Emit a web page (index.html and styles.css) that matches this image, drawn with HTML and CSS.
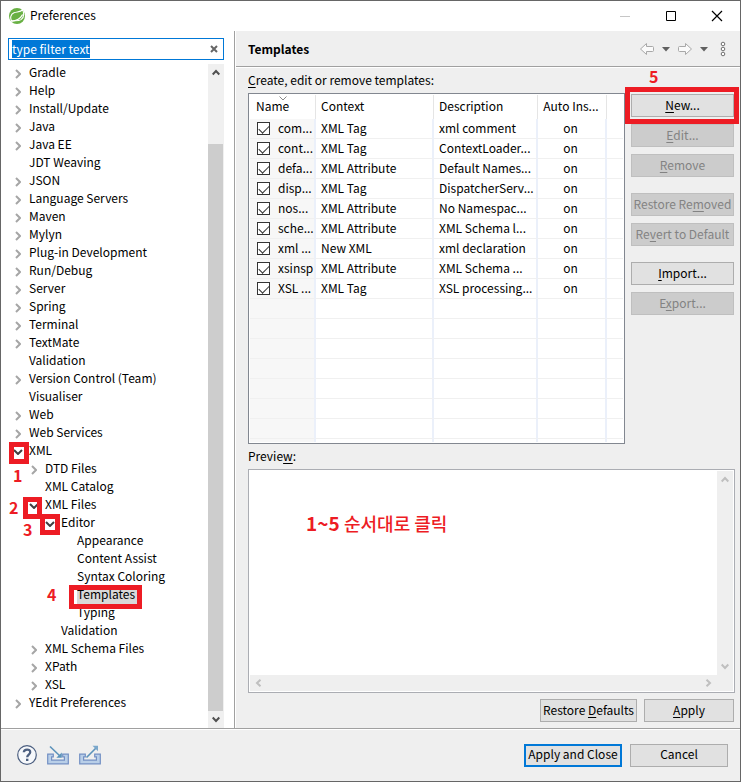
FILE: index.html
```html
<!DOCTYPE html>
<html lang="en">
<head>
<meta charset="utf-8">
<title>Preferences</title>
<link rel="stylesheet" href="styles.css">
</head>
<body>
<svg class="defs" aria-hidden="true">
  <symbol id="right" viewBox="0 0 6 10"><path d="M1 1l4 4-4 4" fill="none" stroke="#a6a6a6" stroke-width="2"/></symbol>
  <symbol id="down" viewBox="0 0 10 6"><path d="M1 1l4 4 4-4" fill="none" stroke="#404040" stroke-width="2"/></symbol>
  <symbol id="scroll-up" viewBox="0 0 8 7"><path d="M.7 5.500L4 2l3.300 3.500" fill="none" stroke="currentColor" stroke-width="2"/></symbol>
  <symbol id="scroll-down" viewBox="0 0 8 7"><path d="M.7 1.500L4 5l3.300-3.500" fill="none" stroke="currentColor" stroke-width="2"/></symbol>
  <symbol id="scroll-left" viewBox="0 0 7 8"><path d="M5.500.7L2 4l3.500 3.300" fill="none" stroke="currentColor" stroke-width="2"/></symbol>
  <symbol id="scroll-right" viewBox="0 0 7 8"><path d="M1.500.7L5 4 1.500 7.300" fill="none" stroke="currentColor" stroke-width="2"/></symbol>
</svg>

<header class="titlebar">
  <svg class="logo" width="16" height="16" viewBox="0 0 16 16">
    <circle cx="8" cy="8" r="8" fill="#68b043"/>
    <path d="M13.600 1.600C15.200 5.500 14.800 9.600 12 11.600c-2.800 1.900-6 .8-9.300 1.500C.9 10 1.500 6.200 5 4.800c3.200-1.200 6.600-.4 8.600-3.200z" fill="#68b043" stroke="#fff" stroke-width="1.100"/>
    <path d="M2.300 13.200c4.700-.4 9-2.200 11.300-6.700" fill="none" stroke="#fff" stroke-width="1.300"/>
  </svg>
  <h1>Preferences</h1>
  <div class="window-controls">
    <button type="button" aria-label="Minimize" disabled><svg width="12" height="12"><path d="M1 6.500h10" stroke="#c6c6c6"/></svg></button>
    <button type="button" aria-label="Maximize"><svg width="12" height="12"><path d="M1.500 1.500h9v9h-9z" fill="none" stroke="#000"/></svg></button>
    <button type="button" aria-label="Close"><svg width="12" height="12"><path d="M1 1l10 10M11 1L1 11" stroke="#000" stroke-width="1.200"/></svg></button>
  </div>
</header>

<main class="panes">
  <nav class="sidebar" aria-label="Preference pages">
    <div class="filter">
      <input type="text" aria-label="Filter" value="type filter text" id="filter" autofocus>
      <button type="button" aria-label="Clear"><svg width="8" height="8"><path d="M1 1l6 6M7 1L1 7" stroke="#666" stroke-width="2"/></svg></button>
    </div>
    <div class="tree-area">
      <ul class="tree">
        <li><div class="row"><button type="button" aria-label="Expand"><svg width="6" height="10"><use href="#right"/></svg></button><span>Gradle</span></div></li>
        <li><div class="row"><button type="button" aria-label="Expand"><svg width="6" height="10"><use href="#right"/></svg></button><span>Help</span></div></li>
        <li><div class="row"><button type="button" aria-label="Expand"><svg width="6" height="10"><use href="#right"/></svg></button><span>Install/Update</span></div></li>
        <li><div class="row"><button type="button" aria-label="Expand"><svg width="6" height="10"><use href="#right"/></svg></button><span>Java</span></div></li>
        <li><div class="row"><button type="button" aria-label="Expand"><svg width="6" height="10"><use href="#right"/></svg></button><span>Java EE</span></div></li>
        <li><div class="row leaf"><span>JDT Weaving</span></div></li>
        <li><div class="row"><button type="button" aria-label="Expand"><svg width="6" height="10"><use href="#right"/></svg></button><span>JSON</span></div></li>
        <li><div class="row"><button type="button" aria-label="Expand"><svg width="6" height="10"><use href="#right"/></svg></button><span>Language Servers</span></div></li>
        <li><div class="row"><button type="button" aria-label="Expand"><svg width="6" height="10"><use href="#right"/></svg></button><span>Maven</span></div></li>
        <li><div class="row"><button type="button" aria-label="Expand"><svg width="6" height="10"><use href="#right"/></svg></button><span>Mylyn</span></div></li>
        <li><div class="row"><button type="button" aria-label="Expand"><svg width="6" height="10"><use href="#right"/></svg></button><span>Plug-in Development</span></div></li>
        <li><div class="row"><button type="button" aria-label="Expand"><svg width="6" height="10"><use href="#right"/></svg></button><span>Run/Debug</span></div></li>
        <li><div class="row"><button type="button" aria-label="Expand"><svg width="6" height="10"><use href="#right"/></svg></button><span>Server</span></div></li>
        <li><div class="row"><button type="button" aria-label="Expand"><svg width="6" height="10"><use href="#right"/></svg></button><span>Spring</span></div></li>
        <li><div class="row"><button type="button" aria-label="Expand"><svg width="6" height="10"><use href="#right"/></svg></button><span>Terminal</span></div></li>
        <li><div class="row"><button type="button" aria-label="Expand"><svg width="6" height="10"><use href="#right"/></svg></button><span>TextMate</span></div></li>
        <li><div class="row leaf"><span>Validation</span></div></li>
        <li><div class="row"><button type="button" aria-label="Expand"><svg width="6" height="10"><use href="#right"/></svg></button><span>Version Control (Team)</span></div></li>
        <li><div class="row leaf"><span>Visualiser</span></div></li>
        <li><div class="row"><button type="button" aria-label="Expand"><svg width="6" height="10"><use href="#right"/></svg></button><span>Web</span></div></li>
        <li><div class="row"><button type="button" aria-label="Expand"><svg width="6" height="10"><use href="#right"/></svg></button><span>Web Services</span></div></li>
        <li>
          <div class="row"><button type="button" aria-label="Collapse"><svg width="10" height="6"><use href="#down"/></svg></button><span>XML</span><i class="mark mark-1"></i><b class="step step-1">1</b></div>
          <ul>
            <li><div class="row"><button type="button" aria-label="Expand"><svg width="6" height="10"><use href="#right"/></svg></button><span>DTD Files</span></div></li>
            <li><div class="row leaf"><span>XML Catalog</span></div></li>
            <li>
              <div class="row"><button type="button" aria-label="Collapse"><svg width="10" height="6"><use href="#down"/></svg></button><span>XML Files</span><i class="mark mark-2"></i><b class="step step-2">2</b></div>
              <ul>
                <li>
                  <div class="row"><button type="button" aria-label="Collapse"><svg width="10" height="6"><use href="#down"/></svg></button><span>Editor</span><i class="mark mark-3"></i><b class="step step-3">3</b></div>
                  <ul>
                    <li><div class="row leaf"><span>Appearance</span></div></li>
                    <li><div class="row leaf"><span>Content Assist</span></div></li>
                    <li><div class="row leaf"><span>Syntax Coloring</span></div></li>
                    <li><div class="row leaf"><span class="selected">Templates</span><i class="mark mark-4"></i><b class="step step-4">4</b></div></li>
                    <li><div class="row leaf"><span>Typing</span></div></li>
                  </ul>
                </li>
                <li><div class="row leaf"><span>Validation</span></div></li>
              </ul>
            </li>
            <li><div class="row"><button type="button" aria-label="Expand"><svg width="6" height="10"><use href="#right"/></svg></button><span>XML Schema Files</span></div></li>
            <li><div class="row"><button type="button" aria-label="Expand"><svg width="6" height="10"><use href="#right"/></svg></button><span>XPath</span></div></li>
            <li><div class="row"><button type="button" aria-label="Expand"><svg width="6" height="10"><use href="#right"/></svg></button><span>XSL</span></div></li>
          </ul>
        </li>
        <li><div class="row"><button type="button" aria-label="Expand"><svg width="6" height="10"><use href="#right"/></svg></button><span>YEdit Preferences</span></div></li>
      </ul>
      <div class="scrollbar">
        <button type="button" aria-label="Scroll up"><svg width="8" height="7"><use href="#scroll-up"/></svg></button>
        <div class="track"><div class="thumb"></div></div>
        <button type="button" aria-label="Scroll down"><svg width="8" height="7"><use href="#scroll-down"/></svg></button>
      </div>
    </div>
  </nav>

  <section class="page">
    <header class="page-head">
      <h2>Templates</h2>
      <div class="tools">
        <button type="button" aria-label="Back"><svg width="16" height="14"><path d="M1.500 7L7.500 1.500v3h6q1 0 1 1v3q0 1-1 1h-6v3z" fill="#fafafa" stroke="#a8a8a8"/></svg></button>
        <button type="button" aria-label="Back history"><svg width="8" height="5"><path d="M0 0h8L4 4.500z" fill="#606060"/></svg></button>
        <button type="button" aria-label="Forward"><svg width="16" height="14"><path d="M14.500 7L8.500 1.500v3h-6q-1 0-1 1v3q0 1 1 1h6v3z" fill="#fafafa" stroke="#a8a8a8"/></svg></button>
        <button type="button" aria-label="Forward history"><svg width="8" height="5"><path d="M0 0h8L4 4.500z" fill="#606060"/></svg></button>
        <button type="button" aria-label="Menu"><svg width="6" height="16" fill="#fff" stroke="#707070"><circle cx="3" cy="3" r="1.800"/><circle cx="3" cy="8" r="1.800"/><circle cx="3" cy="13" r="1.800"/></svg></button>
      </div>
    </header>

    <div class="content">
      <p class="label"><u>C</u>reate, edit or remove templates:</p>
      <div class="editor">
        <div class="table-box">
          <table>
            <colgroup><col class="c-name"><col class="c-context"><col class="c-desc"><col class="c-auto"><col></colgroup>
            <thead><tr><th class="sorted">Name<svg width="8" height="5"><path d="M.5.5L4 4 7.500.5" fill="none" stroke="#888"/></svg></th><th>Context</th><th>Description</th><th class="on">Auto Ins...</th><th></th></tr></thead>
            <tbody>
              <tr><td><label><input type="checkbox" checked>com...</label></td><td>XML Tag</td><td>xml comment</td><td class="on">on</td><td></td></tr>
              <tr><td><label><input type="checkbox" checked>cont...</label></td><td>XML Tag</td><td>ContextLoader...</td><td class="on">on</td><td></td></tr>
              <tr><td><label><input type="checkbox" checked>defa...</label></td><td>XML Attribute</td><td>Default Names...</td><td class="on">on</td><td></td></tr>
              <tr><td><label><input type="checkbox" checked>disp...</label></td><td>XML Tag</td><td>DispatcherServ...</td><td class="on">on</td><td></td></tr>
              <tr><td><label><input type="checkbox" checked>nos...</label></td><td>XML Attribute</td><td>No Namespac...</td><td class="on">on</td><td></td></tr>
              <tr><td><label><input type="checkbox" checked>sche...</label></td><td>XML Attribute</td><td>XML Schema l...</td><td class="on">on</td><td></td></tr>
              <tr><td><label><input type="checkbox" checked>xml ...</label></td><td>New XML</td><td>xml declaration</td><td class="on">on</td><td></td></tr>
              <tr><td><label><input type="checkbox" checked>xsinsp</label></td><td>XML Attribute</td><td>XML Schema ...</td><td class="on">on</td><td></td></tr>
              <tr><td><label><input type="checkbox" checked>XSL ...</label></td><td>XML Tag</td><td>XSL processing...</td><td class="on">on</td><td></td></tr>
              <tr><td></td><td></td><td></td><td></td><td></td></tr>
              <tr><td></td><td></td><td></td><td></td><td></td></tr>
              <tr><td></td><td></td><td></td><td></td><td></td></tr>
              <tr><td></td><td></td><td></td><td></td><td></td></tr>
              <tr><td></td><td></td><td></td><td></td><td></td></tr>
              <tr><td></td><td></td><td></td><td></td><td></td></tr>
              <tr><td></td><td></td><td></td><td></td><td></td></tr>
              <tr class="rest"><td></td><td></td><td></td><td></td><td></td></tr>
            </tbody>
          </table>
        </div>
        <div class="actions">
          <div class="group">
            <div class="anchor"><button type="button" class="btn"><span><u>N</u>ew...</span></button><i class="mark mark-5"></i><b class="step step-5">5</b></div>
            <button type="button" class="btn" disabled><span><u>E</u>dit...</span></button>
            <button type="button" class="btn" disabled><span><u>R</u>emove</span></button>
          </div>
          <div class="group">
            <button type="button" class="btn" disabled><span>Restore Re<u>m</u>oved</span></button>
            <button type="button" class="btn" disabled><span>Re<u>v</u>ert to Default</span></button>
          </div>
          <div class="group">
            <button type="button" class="btn"><span><u>I</u>mport...</span></button>
            <button type="button" class="btn" disabled><span>E<u>x</u>port...</span></button>
          </div>
        </div>
      </div>

      <label class="label preview-label" for="preview">Previe<u>w</u>:</label>
      <div class="preview">
        <textarea id="preview" readonly></textarea>
        <div class="scrollbar faint">
          <button type="button" aria-label="Scroll up"><svg width="8" height="7"><use href="#scroll-up"/></svg></button>
          <div class="track"></div>
          <button type="button" aria-label="Scroll down"><svg width="8" height="7"><use href="#scroll-down"/></svg></button>
        </div>
        <div class="scrollbar-h faint">
          <button type="button" aria-label="Scroll left"><svg width="7" height="8"><use href="#scroll-left"/></svg></button>
          <button type="button" aria-label="Scroll right"><svg width="7" height="8"><use href="#scroll-right"/></svg></button>
        </div>
        <b class="step note">1~5 <span>순서대로 클릭</span></b>
      </div>

      <div class="page-actions">
        <button type="button" class="btn wide"><span>Restore <u>D</u>efaults</span></button>
        <button type="button" class="btn apply"><span><u>A</u>pply</span></button>
      </div>
    </div>
  </section>
</main>

<footer class="footer">
  <div class="foot-icons">
    <button type="button" aria-label="Help"><svg width="20" height="20"><circle cx="10" cy="10" r="9.300" fill="#f6f8fb" stroke="#4c5f80" stroke-width="1.200"/><path d="M6.800 7.300C7 3.600 13.400 3.600 13.200 7.300 13.100 9.600 10.200 9.700 10.200 12.300" fill="none" stroke="#4c5f80" stroke-width="2.300"/><path d="M9 13.700h2.400v2.300H9z" fill="#4c5f80"/></svg></button>
    <button type="button" aria-label="Import"><svg width="22" height="20"><path d="M.7 9.200h5.600v2.600H4.600v3.400h12.800v-3.400h-1.700V9.200h5.600v9.600H.7z" fill="#b9cfe8" stroke="#7390c4" stroke-width="1.200"/><path d="M3 1.500l10.500 10" stroke="#5b92ba" stroke-width="1.600"/><path d="M14.800 7.500v5.300H9.300z" fill="#5b92ba"/></svg></button>
    <button type="button" aria-label="Export"><svg width="22" height="20"><path d="M.7 9.200h5.600v2.600H4.600v3.400h12.800v-3.400h-1.700V9.200h5.600v9.600H.7z" fill="#b9cfe8" stroke="#7390c4" stroke-width="1.200"/><path d="M7.500 12.500L18 2" stroke="#5b92ba" stroke-width="1.600"/><path d="M13.500.8H19v5.500z" fill="#7aa7cb"/></svg></button>
  </div>
  <div class="foot-actions">
    <button type="button" class="btn primary"><span>Apply and Close</span></button>
    <button type="button" class="btn"><span>Cancel</span></button>
  </div>
</footer>
<script src="script.js"></script>
</body>
</html>
```
FILE: styles.css
```css
* { box-sizing: border-box; }

body {
  margin: 0;
  min-height: 100vh;
  display: flex;
  flex-direction: column;
  border: 1px solid #666;
  background: #efefef;
  color: #000;
  font: 12px/18px "Noto Sans CJK KR", sans-serif;
}

button {
  margin: 0;
  padding: 0;
  border: 0;
  background: none;
  color: inherit;
  font: inherit;
}

svg { display: block; }
ul { list-style: none; margin: 0; padding: 0; }
.defs { position: absolute; width: 0; height: 0; }

.titlebar {
  display: flex;
  align-items: center;
  height: 30px;
  padding: 0 17px 0 8px;
  background: #fff;
}
.titlebar h1 { margin: 0 auto 0 5px; padding-bottom: 2px; font-size: 12px; font-weight: 400; }
.window-controls { display: flex; gap: 34px; }

.panes { flex: 1; display: grid; grid-template-columns: 235px 1fr; }

.sidebar {
  display: flex;
  flex-direction: column;
  border-right: 1px solid #fff;
  background: #fff;
  box-shadow: inset -1px 0 #a0a0a0;
}
.filter {
  display: flex;
  align-items: center;
  height: 22px;
  margin: 7px 11px 4px 7px;
  padding: 0 5px 0 2px;
  border: 1px solid #0078d7;
}
.filter input {
  flex: 1;
  min-width: 0;
  height: 18px;
  padding: 0 1px;
  border: 0;
  outline: 0;
  font: inherit;
}
.filter input::selection { background: #0078d7; color: #fff; }

.tree-area { flex: 1; display: flex; margin-right: 11px; }
.tree { flex: 1; padding-left: 12px; }
.tree ul { padding-left: 16px; }
.row { position: relative; display: flex; align-items: center; height: 18px; }
.row button { display: flex; align-items: center; justify-content: center; width: 12px; height: 10px; margin: 2px 4px 0 -1px; }
.row button + span { margin-left: 1px; }
.row.leaf { padding-left: 16px; }
.row span { padding-bottom: 2px; white-space: nowrap; line-height: 16px; }
.selected { background: #d9d9d9; padding-right: 2px; }

.scrollbar { display: flex; flex-direction: column; width: 16px; background: #f0f0f0; color: #505050; }
.scrollbar button { display: flex; align-items: center; justify-content: center; height: 17px; }
.track { flex: 1; padding-top: 63px; display: flex; }
.thumb { flex: 1; margin-right: 1px; background: #cdcdcd; }
.faint { color: #bfbfbf; }

.mark { position: absolute; border: 5px solid #ed1c24; z-index: 1; }
.step { position: absolute; z-index: 1; color: #ed1c24; font-size: 16px; line-height: 16px; font-weight: 700; }
.mark-1 { left: -4px; top: 0; width: 20px; height: 22px; }
.step-1 { left: 0; top: 25px; }
.mark-2 { left: -6px; top: 1px; width: 19px; height: 22px; }
.step-2 { left: -20px; top: 3px; }
.mark-3 { left: -5px; top: 0; width: 20px; height: 21px; }
.step-3 { left: -22px; top: 7px; }
.mark-4 { left: 8px; top: -1px; width: 73px; height: 24px; }
.step-4 { left: -14px; top: 0; }
.mark-5 { left: -6px; top: -7px; width: 114px; height: 37px; }
.step-5 { left: 18px; top: -26px; }

.page { display: flex; flex-direction: column; min-width: 0; }
.page-head {
  display: flex;
  align-items: center;
  justify-content: space-between;
  height: 37px;
  padding: 0 14px 0 12px;
  border-bottom: 1px solid #fff;
  box-shadow: inset 0 -1px #a0a0a0;
}
.page-head h2 { margin: 0; font-size: 12px; font-weight: 700; }
.tools { display: flex; align-items: center; gap: 7px; }
.tools button:last-child { margin-left: 5px; }

.content { flex: 1; display: flex; flex-direction: column; padding: 4px 5px 6px 12px; }
.label { display: block; margin: 0 0 3px; padding-bottom: 2px; line-height: 16px; }
u { text-underline-offset: 2px; text-decoration-thickness: 1px; }

.editor { display: flex; gap: 6px; margin-right: 1px; }
.table-box { flex: 1; padding: 1px; border: 1px solid #828790; background: #fff; }
table { width: 100%; border-collapse: separate; border-spacing: 0; table-layout: fixed; }
.c-name { width: 66px; }
.c-context { width: 118px; }
.c-desc { width: 104px; }
.c-auto { width: 69px; }
th, td { padding: 0 0 2px 5px; text-align: left; font-weight: 400; white-space: nowrap; overflow: hidden; line-height: 16px; }
th { height: 24px; border-right: 1px solid #e5e5e5; }
th:last-child { border-right: 0; }
td { height: 20px; border-right: 2px solid #ebf0fa; border-bottom: 1px solid #f0f0f0; }
td:first-child { background: #f7f7f7; }
th:first-child { padding-left: 6px; }
td:first-child { padding-left: 7px; }
td:last-child { border-right: 0; }
.on { padding-left: 3px; padding-right: 5px; text-align: center; }
.rest td { height: 3px; padding: 0; border-bottom: 0; }
.sorted { position: relative; }
.sorted svg { position: absolute; left: 29px; top: 1px; }
td label { display: flex; align-items: center; gap: 8px; }
td input {
  appearance: none;
  flex: none;
  width: 13px;
  height: 13px;
  margin: 2px 0 0;
  border: 1px solid #333;
  background: #fff;
  display: grid;
  place-items: center;
}
td input:checked::before {
  content: "";
  width: 9px;
  height: 5px;
  margin-top: -2px;
  border: solid #333;
  border-width: 0 0 1px 1px;
  rotate: -45deg;
}

.actions { width: 103px; display: flex; flex-direction: column; gap: 16px; padding-top: 1px; }
.group { display: flex; flex-direction: column; gap: 7px; }
.anchor { position: relative; display: flex; }
.btn {
  display: flex;
  align-items: center;
  justify-content: center;
  width: 103px;
  height: 23px;
  padding-bottom: 2px;
  border: 1px solid #adadad;
  background: #e1e1e1;
  white-space: nowrap;
}
.btn:disabled { border-color: #bfbfbf; background: #ccc; color: #838383; }

.preview-label { margin: 4px 0 3px; }
.preview {
  position: relative;
  flex: 1;
  display: grid;
  grid-template: 1fr 16px / 1fr 16px;
  padding: 1px;
  border: 1px solid #abadb3;
  background: #efefef;
  box-shadow: inset 0 0 0 1px #fff;
}
.preview textarea { width: 100%; height: 100%; padding: 2px; border: 0; outline: 0; resize: none; background: #fff; font: inherit; }
.preview .scrollbar { background: none; }
.scrollbar-h { display: flex; justify-content: space-between; align-items: center; padding: 0 5px; }
.note { left: 57px; top: 45px; font-size: 19px; white-space: nowrap; }
.note span { font-size: 18px; font-weight: 500; }

.page-actions { display: flex; justify-content: flex-end; gap: 7px; margin: 6px 1px 0 0; }
.wide { width: 97px; }
.apply { width: 90px; }

.footer {
  display: flex;
  align-items: center;
  justify-content: space-between;
  height: 53px;
  padding: 0 12px 0 16px;
  border-top: 1px solid #a0a0a0;
  box-shadow: inset 0 1px #fff;
}
.foot-icons { display: flex; align-items: center; gap: 10px; }
.foot-actions { display: flex; gap: 8px; }
.foot-actions .btn { width: 98px; }
.foot-actions .primary { border: 2px solid #0078d7; }
```
FILE: script.js
```js
document.getElementById("filter").select();
```
